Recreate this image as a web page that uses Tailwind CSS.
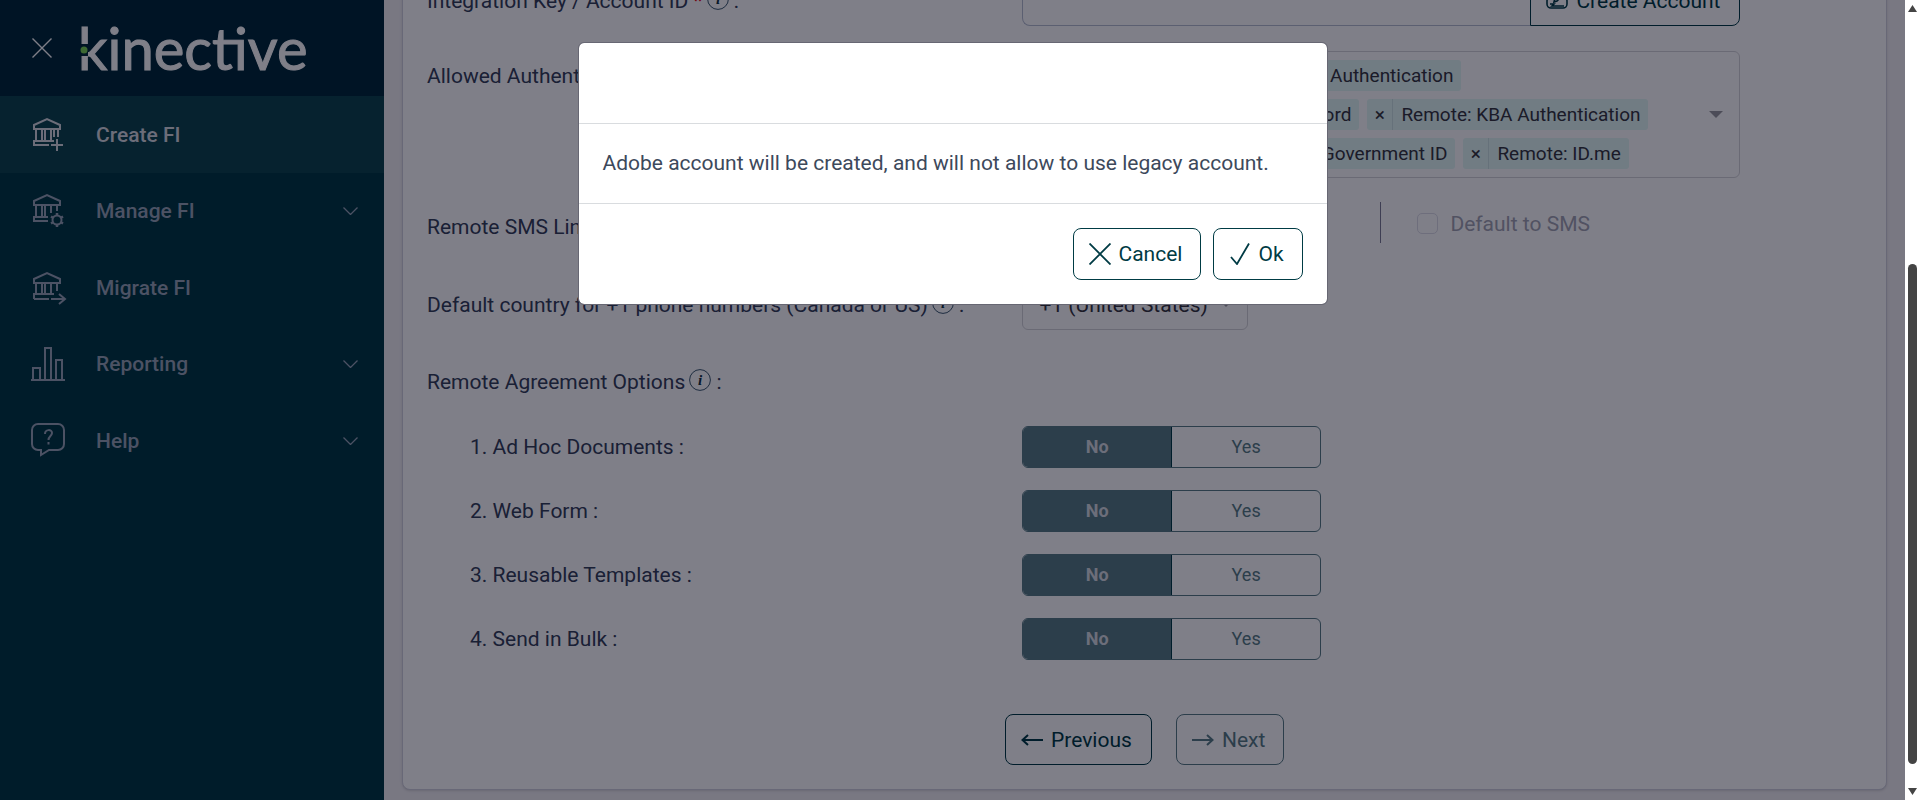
<!DOCTYPE html>
<html lang="en">
  <head>
    <meta charset="UTF-8" />
    <meta name="viewport" content="width=device-width, initial-scale=1.0" />
    <script src="https://cdn.jsdelivr.net/npm/@tailwindcss/browser@4"></script>
    <title>Kinective - Create FI</title>
  </head>
  <body class="flex h-screen overflow-hidden bg-white font-['Roboto',sans-serif] text-[21px] leading-[30px] text-[#344058]">
    <div class="relative flex min-w-0 flex-1">
      <!-- sidebar -->
      <aside class="flex w-96 shrink-0 flex-col bg-[#003842] text-[#98a4b6]">
        <div class="flex h-24 items-center bg-[#002838] pl-8 text-white">
          <button type="button" aria-label="Close menu">
            <svg class="size-5" viewBox="0 0 20 20" fill="none" stroke="currentColor" stroke-width="1.4">
              <path d="M.5.5l19 19M19.5.5l-19 19" />
            </svg>
          </button>
          <a href="#" class="relative ml-[26px] font-['Lato',sans-serif] text-[58px] leading-[96px] [-webkit-text-stroke:1px]">
            kinective
            <svg class="absolute left-0 top-[44px] h-3 w-[10px]" viewBox="0 0 10 12">
              <path d="M0 0h10v12H0z" fill="#002838" />
              <circle cx="6" cy="6" r="3.5" fill="#7ad254" />
            </svg>
          </a>
        </div>
        <nav class="flex flex-col font-medium">
          <a href="#" class="flex h-[77px] items-center bg-[#0c444d] pl-8 text-[#d8dae0]">
            <svg class="h-9 w-9" viewBox="0 0 36 36" fill="none" stroke="currentColor" stroke-width="2">
              <path d="M2 12V8l13-6 13 6v4zM4 12v11M10 12v11M13 12v11M19 12v11M22 12v8M26 12v8M2 29v-5h20M2 28h15M19 28h12M25 22v12" />
            </svg>
            <span class="ml-7">Create FI</span>
          </a>
          <a href="#" class="flex h-[76px] items-center pl-8 pr-[26px]">
            <svg class="h-9 w-9" viewBox="0 0 36 36" fill="none" stroke="currentColor" stroke-width="2">
              <path d="M2 12V8l13-6 13 6v4zM4 12v11M10 12v11M13 12v11M19 12v8M25 12v6M2 29v-5h14M2 28h14" />
              <circle cx="25" cy="27" r="4.5" />
              <path d="M25 20v3M25 31v3M19 23.500l2.500 1.500M28.500 29l2.500 1.500M19 30.500l2.500-1.500M28.500 25l2.500-1.500" stroke-width="2.500" />
            </svg>
            <span class="ml-7 flex-1">Manage FI</span>
            <svg class="h-2 w-[15px]" viewBox="0 0 15 8" fill="none" stroke="currentColor" stroke-width="1.300"><path d="M.5.5l7 7 7-7" /></svg>
          </a>
          <a href="#" class="flex h-[77px] items-center pl-8">
            <svg class="h-9 w-9" viewBox="0 0 36 36" fill="none" stroke="currentColor" stroke-width="2">
              <path d="M2 13V9l13-6 13 6v4zM4 13v11M10 13v11M13 13v11M19 13v11M25 13v8M2 29v-5h20M2 29h15M19 29h14M27 24l6 5-6 5" />
            </svg>
            <span class="ml-7">Migrate FI</span>
          </a>
          <a href="#" class="flex h-[76px] items-center pl-[31px] pr-[26px]">
            <svg class="h-9 w-9" viewBox="0 0 36 36" fill="none" stroke="currentColor" stroke-width="2">
              <path d="M0 34h34M2 34V22h7v12M14 34V2h6v32M25 34V14h6v20" />
            </svg>
            <span class="ml-[29px] flex-1">Reporting</span>
            <svg class="h-2 w-[15px]" viewBox="0 0 15 8" fill="none" stroke="currentColor" stroke-width="1.300"><path d="M.5.5l7 7 7-7" /></svg>
          </a>
          <a href="#" class="flex h-[77px] items-center pl-[31px] pr-[26px]">
            <svg class="h-9 w-9" viewBox="0 0 36 36" fill="none" stroke="currentColor" stroke-width="2">
              <path d="M7 1h20a6 6 0 0 1 6 6v14a6 6 0 0 1-6 6h-9l-8 5v-5H7a6 6 0 0 1-6-6V7a6 6 0 0 1 6-6z" />
              <path d="M14 11c0-5 7-5 7-1 0 3-3.500 3-3.500 7M17.500 19v2.500" />
            </svg>
            <span class="ml-[29px] flex-1">Help</span>
            <svg class="h-2 w-[15px]" viewBox="0 0 15 8" fill="none" stroke="currentColor" stroke-width="1.300"><path d="M.5.5l7 7 7-7" /></svg>
          </a>
        </nav>
      </aside>

      <!-- form, scrolled to its end -->
      <main class="flex min-w-0 flex-1 flex-col justify-end overflow-hidden bg-[#f2f0f3] px-[18px] pb-[10px]">
        <form class="flex shrink-0 flex-col rounded-lg border border-[#d0d0dc] bg-white pb-6 pl-6 pr-[30px] shadow-sm" onsubmit="return false">
          <div class="mb-[25px] flex">
            <label for="accountId" class="flex w-5/12 items-center whitespace-pre">Integration Key / Account ID <span class="text-red-600">*</span><svg class="mb-1 ml-1 size-[22px]" viewBox="0 0 22 22"><circle cx="11" cy="11" r="10.400" fill="none" stroke="#3d5a70" stroke-width="1" /><text x="11" y="16" text-anchor="middle" fill="#103040" font-family="Liberation Serif, serif" font-size="15" font-style="italic" font-weight="bold">i</text></svg> :</label>
            <div class="flex h-[51px] w-[718px]">
              <input id="accountId" type="text" class="min-w-0 flex-1 rounded-l-lg border border-r-0 border-[#b6bed0] px-4" />
              <button type="button" class="flex w-[210px] items-center gap-2 rounded-r-lg border border-[#003b44] pl-[15px] text-[#003b44]">
                <svg class="size-[22px]" viewBox="0 0 22 22" fill="none" stroke="currentColor" stroke-width="1.600">
                  <path d="M5 8H4a3 3 0 0 0-3 3v3a4 4 0 0 0 4 4h12a4 4 0 0 0 4-4v-3a3 3 0 0 0-3-3M4 14h4l-2 2h12M8 12l1-4 7-6 2 2-7 7z" />
                </svg>
                Create Account
              </button>
            </div>
          </div>

          <div class="mb-6 flex">
            <div class="w-5/12 leading-[51px]">Allowed Authentication Types :</div>
            <div class="flex w-[718px] items-center rounded-md border border-[#d4d4d8] py-2 pl-[7px] pr-4 text-[19px] leading-[31px] text-[#36363f]">
              <div class="flex flex-1 flex-col gap-2">
                <div class="flex gap-2">
                  <span class="flex w-[130px] rounded-[3px] bg-[#e2f8f4]"><button type="button" class="w-[26px] border-r border-[#cce2e2]">×</button><span class="flex-1 pr-2 text-right">In Person</span></span>
                  <span class="flex w-[293px] rounded-[3px] bg-[#e2f8f4]"><button type="button" class="w-[26px] border-r border-[#cce2e2]">×</button><span class="flex-1 pr-2 text-right">Remote: SMS Authentication</span></span>
                </div>
                <div class="flex gap-2">
                  <span class="flex w-[329px] rounded-[3px] bg-[#e2f8f4]"><button type="button" class="w-[26px] border-r border-[#cce2e2]">×</button><span class="flex-1 pr-2 text-right">Remote: One Time Password</span></span>
                  <span class="flex rounded-[3px] bg-[#e2f8f4]"><button type="button" class="w-[26px] border-r border-[#cce2e2]">×</button><span class="px-2">Remote: KBA Authentication</span></span>
                </div>
                <div class="flex gap-2">
                  <span class="flex w-[425px] rounded-[3px] bg-[#e2f8f4]"><button type="button" class="w-[26px] border-r border-[#cce2e2]">×</button><span class="flex-1 pr-2 text-right">Remote: Government ID</span></span>
                  <span class="flex rounded-[3px] bg-[#e2f8f4]"><button type="button" class="w-[26px] border-r border-[#cce2e2]">×</button><span class="px-2">Remote: ID.me</span></span>
                </div>
              </div>
              <svg class="h-[7px] w-[14px]" viewBox="0 0 14 7"><path d="M0 0h14L7 7z" fill="#99999f" /></svg>
            </div>
          </div>

          <div class="mb-6 flex h-[53px]">
            <div class="w-5/12 leading-[51px]">Remote SMS Link Delivery :</div>
            <div class="ml-[358px] h-[41px] border-l border-[#7c7c94]"></div>
            <div class="ml-9 flex h-[43px] items-center gap-3 text-[#a3a4b2]">
              <input id="defaultSms" type="checkbox" disabled class="size-[21px] appearance-none rounded-[5px] border border-[#dcdce6]" />
              <label for="defaultSms">Default to SMS</label>
            </div>
          </div>

          <div class="mb-[26px] flex">
            <label for="country" class="flex w-5/12 items-center whitespace-pre">Default country for +1 phone numbers (Canada or US)<svg class="mb-1 ml-1 size-[22px]" viewBox="0 0 22 22"><circle cx="11" cy="11" r="10.400" fill="none" stroke="#3d5a70" stroke-width="1" /><text x="11" y="16" text-anchor="middle" fill="#103040" font-family="Liberation Serif, serif" font-size="15" font-style="italic" font-weight="bold">i</text></svg> :</label>
            <div class="relative w-[226px]">
              <select id="country" class="h-[51px] w-full appearance-none rounded-md border border-[#d4d4d8] pl-4 text-[#36363f]">
                <option>+1 (United States)</option>
                <option>+1 (Canada)</option>
              </select>
              <svg class="pointer-events-none absolute right-4 top-[22px] h-[6px] w-3" viewBox="0 0 12 6"><path d="M0 0h12L6 6z" fill="#99999f" /></svg>
            </div>
          </div>

          <div class="mb-[19px] flex h-[51px] items-center whitespace-pre">Remote Agreement Options<svg class="mb-1 ml-1 size-[22px]" viewBox="0 0 22 22"><circle cx="11" cy="11" r="10.400" fill="none" stroke="#3d5a70" stroke-width="1" /><text x="11" y="16" text-anchor="middle" fill="#103040" font-family="Liberation Serif, serif" font-size="15" font-style="italic" font-weight="bold">i</text></svg> :</div>

          <div class="mb-[54px] flex flex-col gap-[22px]">
            <fieldset class="flex h-[42px] items-center">
              <legend class="float-left w-5/12 pl-[43px]">1. Ad Hoc Documents :</legend>
              <div class="flex h-full w-[299px] overflow-hidden rounded-md border border-[#587c84] text-center text-[18px] leading-10 text-[#587c84]">
                <input id="adhocNo" type="radio" name="adhoc" checked disabled class="peer sr-only" />
                <label for="adhocNo" class="w-1/2 border-r border-[#003b44] peer-checked:bg-[#587c84] peer-checked:font-bold peer-checked:text-[#d9dce2]">No</label>
                <input id="adhocYes" type="radio" name="adhoc" disabled class="sr-only" />
                <label for="adhocYes" class="w-1/2">Yes</label>
              </div>
            </fieldset>
            <fieldset class="flex h-[42px] items-center">
              <legend class="float-left w-5/12 pl-[43px]">2. Web Form :</legend>
              <div class="flex h-full w-[299px] overflow-hidden rounded-md border border-[#587c84] text-center text-[18px] leading-10 text-[#587c84]">
                <input id="webNo" type="radio" name="web" checked disabled class="peer sr-only" />
                <label for="webNo" class="w-1/2 border-r border-[#003b44] peer-checked:bg-[#587c84] peer-checked:font-bold peer-checked:text-[#d9dce2]">No</label>
                <input id="webYes" type="radio" name="web" disabled class="sr-only" />
                <label for="webYes" class="w-1/2">Yes</label>
              </div>
            </fieldset>
            <fieldset class="flex h-[42px] items-center">
              <legend class="float-left w-5/12 pl-[43px]">3. Reusable Templates :</legend>
              <div class="flex h-full w-[299px] overflow-hidden rounded-md border border-[#587c84] text-center text-[18px] leading-10 text-[#587c84]">
                <input id="tplNo" type="radio" name="tpl" checked disabled class="peer sr-only" />
                <label for="tplNo" class="w-1/2 border-r border-[#003b44] peer-checked:bg-[#587c84] peer-checked:font-bold peer-checked:text-[#d9dce2]">No</label>
                <input id="tplYes" type="radio" name="tpl" disabled class="sr-only" />
                <label for="tplYes" class="w-1/2">Yes</label>
              </div>
            </fieldset>
            <fieldset class="flex h-[42px] items-center">
              <legend class="float-left w-5/12 pl-[43px]">4. Send in Bulk :</legend>
              <div class="flex h-full w-[299px] overflow-hidden rounded-md border border-[#587c84] text-center text-[18px] leading-10 text-[#587c84]">
                <input id="bulkNo" type="radio" name="bulk" checked disabled class="peer sr-only" />
                <label for="bulkNo" class="w-1/2 border-r border-[#003b44] peer-checked:bg-[#587c84] peer-checked:font-bold peer-checked:text-[#d9dce2]">No</label>
                <input id="bulkYes" type="radio" name="bulk" disabled class="sr-only" />
                <label for="bulkYes" class="w-1/2">Yes</label>
              </div>
            </fieldset>
          </div>

          <div class="flex justify-center gap-6 pl-[6px]">
            <button type="button" class="flex h-[51px] w-[147px] items-center gap-2 rounded-lg border border-[#003b44] pl-[15px] text-[#003b44]">
              <svg class="h-3 w-[22px]" viewBox="0 0 22 12" fill="none" stroke="currentColor" stroke-width="2"><path d="M22 6H1M7 1L1.500 6 7 11" /></svg>
              Previous
            </button>
            <button type="button" disabled class="flex h-[51px] w-[108px] items-center gap-2 rounded-lg border border-[#587c84] pl-[15px] text-[#587c84]">
              <svg class="h-3 w-[22px]" viewBox="0 0 22 12" fill="none" stroke="currentColor" stroke-width="2"><path d="M0 6h21M15 1l5.500 5-5.500 5" /></svg>
              Next
            </button>
          </div>
        </form>
      </main>

      <!-- dialog -->
      <div class="absolute inset-0 flex items-start justify-center bg-[#000012]/50 pt-[42px]">
        <div role="dialog" aria-modal="true" class="w-[750px] rounded-md border border-[#676773] bg-white bg-clip-padding">
          <div class="h-20"></div>
          <p class="border-y border-[#d9dcdf] px-6 py-6 leading-[31px] text-[#3d495b]">Adobe account will be created, and will not allow to use legacy account.</p>
          <div class="flex justify-end gap-3 p-6 text-[#003b44]">
            <button type="button" class="flex h-[52px] w-32 items-center gap-2 rounded-lg border border-[#003b44] pl-[15px]">
              <svg class="size-[22px]" viewBox="0 0 22 22" fill="none" stroke="currentColor" stroke-width="1.800"><path d="M.5.5l21 21M21.500.5l-21 21" /></svg>
              Cancel
            </button>
            <button type="button" class="flex h-[52px] w-[90px] items-center gap-2 rounded-lg border border-[#003b44] pl-[15px]">
              <svg class="size-[22px]" viewBox="0 0 22 22" fill="none" stroke="currentColor" stroke-width="1.800"><path d="M2 14l6 7L20 .5" /></svg>
              Ok
            </button>
          </div>
        </div>
      </div>
    </div>

    <!-- scrollbar -->
    <div class="flex w-[15px] shrink-0 flex-col items-center bg-white py-[5px]">
      <svg class="h-[7px] w-[9px]" viewBox="0 0 9 7"><path d="M4.500 0L9 7H0z" fill="#444" /></svg>
      <div class="mb-6 mt-[252px] w-[9px] flex-1 rounded-full bg-[#444]"></div>
      <svg class="h-[7px] w-[9px]" viewBox="0 0 9 7"><path d="M4.500 7L9 0H0z" fill="#444" /></svg>
    </div>
  </body>
</html>
